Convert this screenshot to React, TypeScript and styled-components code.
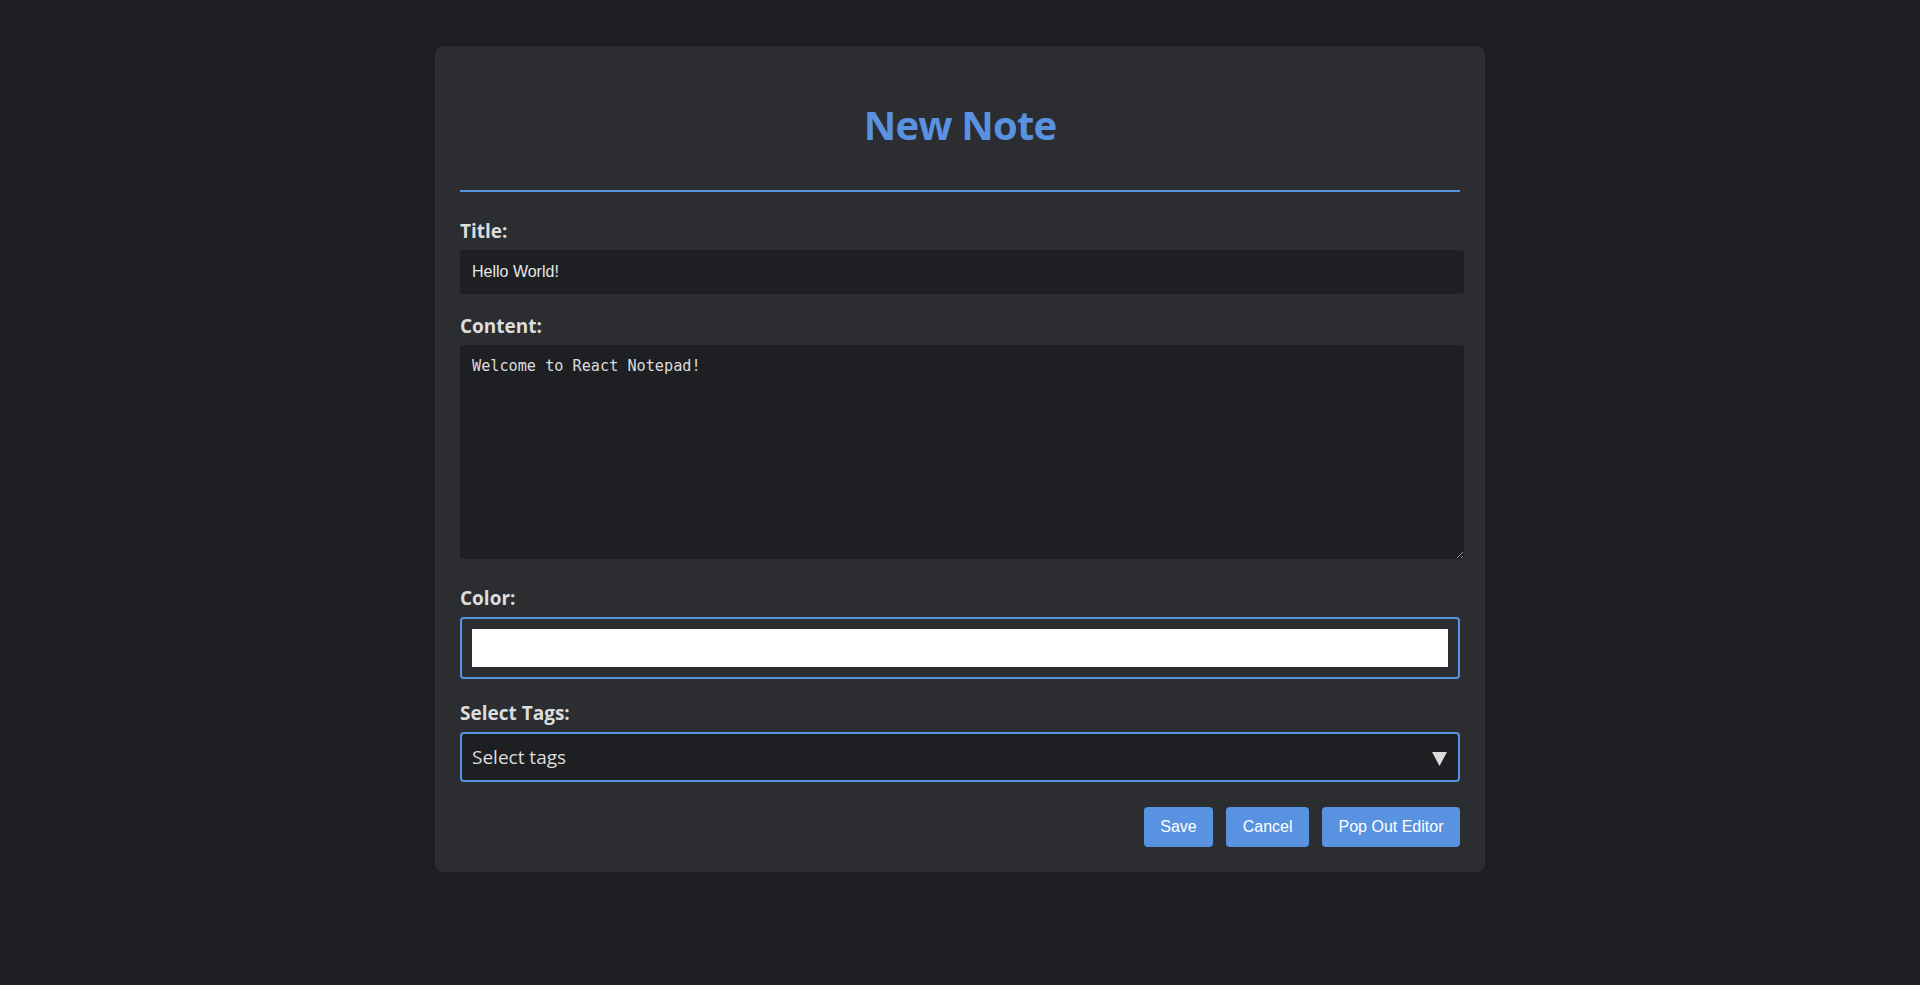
import * as React from 'react';
import styled, { createGlobalStyle } from 'styled-components';

const BLUE = '#5892e0';

const GlobalStyle = createGlobalStyle`
  body {
    margin: 0;
    background-color: #1f2023;
    font-family: 'Open Sans', 'Noto Sans', sans-serif;
  }
`;

export default function App() {
  return (
    <>
      <GlobalStyle />
      <Page>
        <Card>
          <Heading>New Note</Heading>
          <Form onSubmit={(e) => e.preventDefault()}>
            <Group $space={20}>
              <Label htmlFor="title">Title:</Label>
              <TextInput id="title" type="text" defaultValue="Hello World!" />
            </Group>
            <Group $space={27}>
              <Label htmlFor="content">Content:</Label>
              <ContentArea id="content" defaultValue="Welcome to React Notepad!" />
            </Group>
            <Group $space={22}>
              <Label htmlFor="color">Color:</Label>
              <ColorInput id="color" type="color" defaultValue="#ffffff" />
            </Group>
            <Group $space={25}>
              <Label>Select Tags:</Label>
              <TagSelect>
                <span>Select tags</span>
                <svg width="15" height="14" viewBox="0 0 15 14">
                  <polygon points="0,0 15,0 7.5,14" fill="#dcdcdc" />
                </svg>
              </TagSelect>
            </Group>
            <Actions>
              <Button type="submit">Save</Button>
              <Button type="button">Cancel</Button>
              <Button type="button">Pop Out Editor</Button>
            </Actions>
          </Form>
        </Card>
      </Page>
    </>
  );
}

const Page = styled.main`
  padding: 46px 0 60px;
`;

const Card = styled.section`
  width: 1000px;
  margin: 0 auto;
  padding: 25px 25px 25px;
  background-color: #2b2d31;
  border-radius: 8px;
  box-shadow: 0 0 12px rgba(0, 0, 0, 0.12);
`;

const Heading = styled.h1`
  margin: 27px 0 0;
  padding-bottom: 38px;
  border-bottom: 2px solid ${BLUE};
  text-align: center;
  font-size: 40px;
  line-height: 54px;
  font-weight: 700;
  letter-spacing: -0.8px;
  color: ${BLUE};
`;

const Form = styled.form`
  margin-top: 27px;
`;

const Group = styled.div<{ $space: number }>`
  display: flex;
  flex-direction: column;
  margin-bottom: ${(p) => p.$space}px;
`;

const Label = styled.label`
  margin-bottom: 6px;
  font-size: 19px;
  line-height: 25px;
  font-weight: 700;
  color: #dcddde;
`;

const TextInput = styled.input`
  box-sizing: border-box;
  width: calc(100% + 4px);
  height: 44px;
  padding: 0 12px;
  border: none;
  border-radius: 4px;
  outline: none;
  background-color: #1e1f22;
  color: #e6e6e6;
  font-family: 'Liberation Sans', Arial, sans-serif;
  font-size: 16px;
`;

const ContentArea = styled.textarea`
  box-sizing: border-box;
  width: calc(100% + 4px);
  height: 214px;
  padding: 12px;
  border: none;
  border-radius: 4px;
  outline: none;
  resize: vertical;
  background-color: #1e1f22;
  color: #dcdcdc;
  font-family: 'DejaVu Sans Mono', 'Liberation Mono', monospace;
  font-size: 15.2px;
  line-height: 18px;
`;

const ColorInput = styled.input`
  box-sizing: border-box;
  width: 100%;
  height: 62px;
  padding: 10px;
  border: 2px solid ${BLUE};
  border-radius: 4px;
  background-color: #2b2d31;
  cursor: pointer;
  -webkit-appearance: none;
  appearance: none;

  &::-webkit-color-swatch-wrapper {
    padding: 0;
  }
  &::-webkit-color-swatch {
    border: none;
    border-radius: 0;
  }
`;

const TagSelect = styled.div`
  box-sizing: border-box;
  display: flex;
  align-items: center;
  justify-content: space-between;
  height: 50px;
  padding: 0 11px 0 10px;
  border: 2px solid ${BLUE};
  border-radius: 4px;
  background-color: #1e1f22;
  color: #dcdcdc;
  font-size: 19px;
  cursor: pointer;

  svg {
    margin-top: 3px;
  }
`;

const Actions = styled.div`
  display: flex;
  justify-content: flex-end;
  gap: 13px;
`;

const Button = styled.button`
  height: 40px;
  padding: 0 16.5px;
  border: none;
  border-radius: 4px;
  background-color: ${BLUE};
  color: #ffffff;
  font-family: 'Liberation Sans', Arial, sans-serif;
  font-size: 16px;
  cursor: pointer;
`;
